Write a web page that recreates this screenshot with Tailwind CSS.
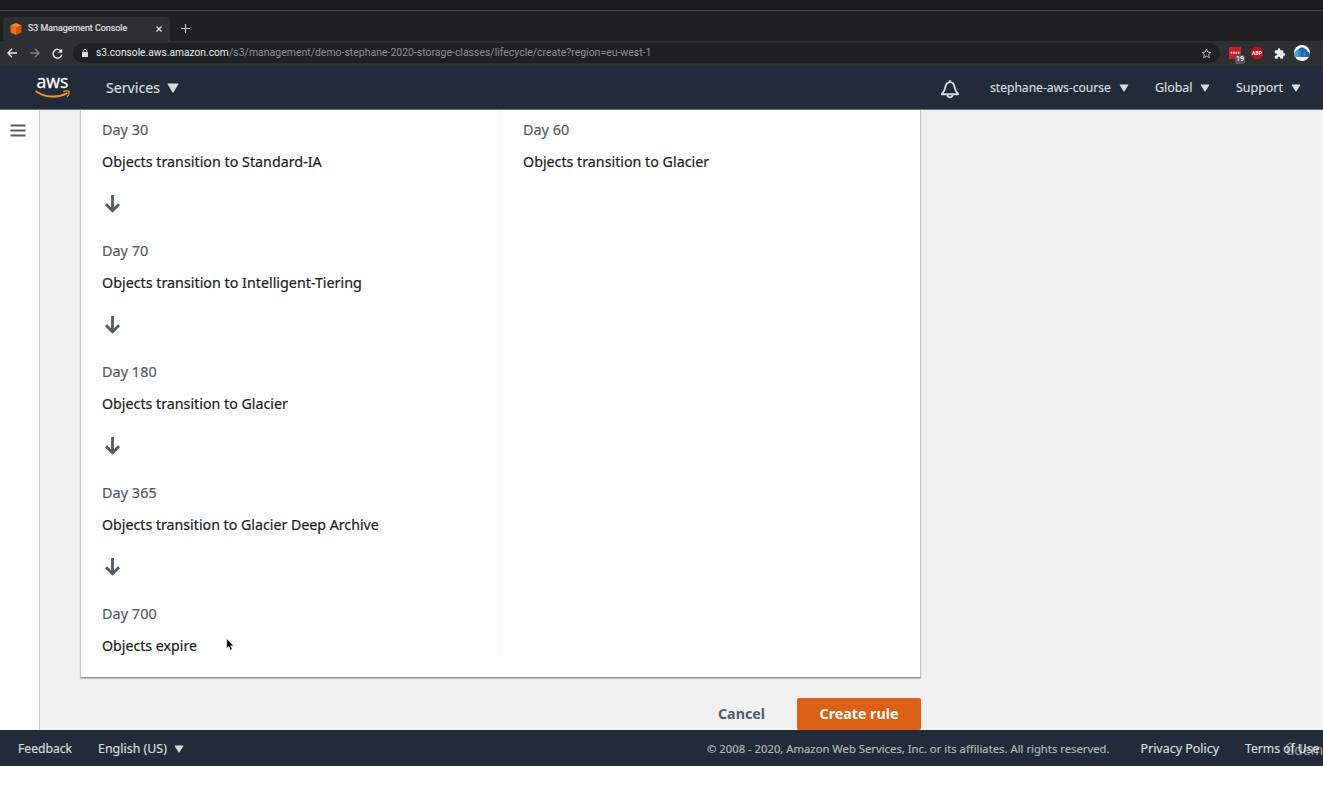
<!DOCTYPE html>
<html lang="en">
<head>
<meta charset="utf-8">
<title>S3 Management Console</title>
<script src="https://cdn.jsdelivr.net/npm/@tailwindcss/browser@4"></script>
</head>
<body class="h-[790px] w-[1323px] overflow-hidden bg-white font-['Noto_Sans',sans-serif] whitespace-nowrap">
<svg class="hidden">
  <symbol id="down" viewBox="0 0 16 20"><path d="M8.500 1v15M2 10.300 8.500 16.800l6.500-6.500" fill="none" stroke="#545b64" stroke-width="2.800"/></symbol>
  <symbol id="caret" viewBox="0 0 12 10"><path d="M.8.500h10.400q.6 0 .3.600L6.600 9.200q-.6.700-1.200 0L.5 1.100Q.2.500.8.500Z" fill="#d5dbdb"/></symbol>
</svg>
<div class="flex h-[766px] flex-col">
  <div class="h-[11px] shrink-0 border-b border-[#484a4c] bg-[#1b1c1e]"></div>

  <!-- Browser tabs -->
  <div class="flex h-[30px] shrink-0 items-end bg-[#1e2022] pl-[3px] font-[Roboto,sans-serif]">
    <div class="flex h-[24px] w-[167px] items-center rounded-t-[5px] bg-[#2e2f33] pl-[7px]">
      <svg class="mr-[6px] h-[12px] w-[12px] shrink-0" viewBox="0 0 12 12"><path d="M6 0 11.500 2.300 6 4.700.5 2.300Z" fill="#f58536"/><path d="M.5 2.300 6 4.500V12L.5 9.500Z" fill="#f26b21"/><path d="M11.500 2.300 6 4.500V12l5.500-2.500Z" fill="#d9500f"/></svg>
      <span class="flex-1 text-[8.900px] text-[#e3e4e6] [-webkit-text-stroke:0.15px]">S3 Management Console</span>
      <svg class="mr-[8px] h-[6px] w-[6px]" viewBox="0 0 6 6"><path d="M.5.500l5 5M5.500.500l-5 5" stroke="#e3e4e6" stroke-width="1.200"/></svg>
    </div>
    <svg class="mb-[8px] ml-[11px] h-[9px] w-[9px]" viewBox="0 0 9 9"><path d="M4.500 0v9M0 4.500h9" stroke="#c2c4c6" stroke-width="1.200"/></svg>
  </div>

  <!-- Address bar -->
  <div class="flex h-[25px] shrink-0 items-center bg-[#2e2f33] pb-[1px] pl-[7px] font-[Roboto,sans-serif]">
    <svg class="h-[10px] w-[10px]" viewBox="0 0 10 10"><path d="M10 5H1M5 .8.900 5 5 9.200" fill="none" stroke="#e8eaed" stroke-width="1.300"/></svg>
    <svg class="ml-[13px] h-[10px] w-[10px]" viewBox="0 0 10 10"><path d="M0 5h9M5 .8 9.100 5 5 9.200" fill="none" stroke="#808285" stroke-width="1.300"/></svg>
    <svg class="ml-[12px] h-[11px] w-[11px]" viewBox="0 0 11 11"><path d="M9.300 3.500A4.400 4.400 0 1 0 9.800 6.600" fill="none" stroke="#e8eaed" stroke-width="1.400"/><path d="M10.200.4v4.400H5.800Z" fill="#e8eaed"/></svg>
    <div class="ml-[10px] flex h-[20px] w-[1147px] items-center rounded-full bg-[#1e2022] pl-[9px] text-[10.400px]">
      <svg class="mr-[8px] h-[8px] w-[6px]" viewBox="0 0 6 8"><rect y="3" width="6" height="5" rx=".6" fill="#dadce0"/><path d="M1.200 3.500V2.200a1.800 1.800 0 0 1 3.600 0v1.300" fill="none" stroke="#dadce0" stroke-width=".9"/></svg>
      <span class="w-[133px] text-[10.230px] text-[#e8eaed]">s3.console.aws.amazon.com</span><span class="text-[10.470px] text-[#8d9093]">/s3/management/demo-stephane-2020-storage-classes/lifecycle/create?region=eu-west-1</span>
      <svg class="mr-[8px] ml-auto h-[11px] w-[11px]" viewBox="0 0 11 11"><path d="M5.500 1.100 6.800 4.100l3.200.3-2.400 2.100.7 3.200-2.800-1.700-2.800 1.700.7-3.200L1 4.400l3.200-.3Z" fill="none" stroke="#c4c6c9" stroke-width=".9"/></svg>
    </div>
    <div class="relative ml-[9px] h-[12px] w-[12px] bg-[#c9202b]">
      <svg class="h-[12px] w-[12px]" viewBox="0 0 12 12"><path d="M1.500 5.800h9" stroke="#f3c6c8" stroke-width="2" stroke-dasharray="1.800 .6"/></svg>
      <span class="absolute top-[8px] left-[6px] h-[9px] w-[10px] rounded-[2px] bg-[#56585b] text-center text-[7px] leading-[9px] font-medium text-white">19</span>
    </div>
    <svg class="ml-[10px] h-[12px] w-[12px]" viewBox="0 0 12 12"><path d="M3.500 0h5L12 3.500v5L8.500 12h-5L0 8.500v-5Z" fill="#c70d1e"/><text x="6" y="7.900" text-anchor="middle" font-size="5" font-weight="700" fill="#fff">ABP</text></svg>
    <svg class="ml-[11px] h-[11px] w-[11px]" viewBox="0 0 22 22"><path d="M20 10.500h-1.500V6.500a2 2 0 0 0-2-2h-4V3a2.500 2.500 0 0 0-5 0v1.500h-4a2 2 0 0 0-2 2v3.800H3a2.700 2.700 0 0 1 0 5.400H1.500v3.800a2 2 0 0 0 2 2h3.800V20a2.700 2.700 0 0 1 5.400 0v1.500h3.800a2 2 0 0 0 2-2v-4H20a2.500 2.500 0 0 0 0-5Z" fill="#eceef0"/></svg>
    <svg class="ml-[9px] h-[16px] w-[16px]" viewBox="0 0 16 16"><circle cx="8" cy="8" r="8" fill="#fff"/><path d="M.8 12a3 3 0 0 1 .4-5A3 3 0 0 1 5 4.600V12Z" fill="#45a5dd"/><path d="M4.600 12V4.500a3.700 3.700 0 0 1 6.600-.6 3 3 0 0 1 2.600 2.900 3 3 0 0 1 1.200 5.200Z" fill="#1c65ac"/><path d="M4.500 5.500h2.600V12H4.500ZM9.500 7h2v5h-2Z" fill="#3186c9"/></svg>
  </div>

  <!-- Console navigation -->
  <header class="flex h-[44px] shrink-0 items-center border-b border-[#6c727b] bg-[#222b39] text-[#d5dbdb] [-webkit-text-stroke:0.2px]">
    <svg class="ml-[34px] h-[30px] w-[38px] overflow-visible" viewBox="0 0 38 30"><text x="2.500" y="15" font-family="Open Sans" font-size="18.500" font-weight="400" textLength="32" lengthAdjust="spacingAndGlyphs" fill="#fff" stroke="#fff" stroke-width=".3">aws</text><path d="M2.300 18.400C11 24.600 23.500 25.200 32.800 20.300" fill="none" stroke="#f29423" stroke-width="1.900" stroke-linecap="round"/><path d="M29.300 18.800c2-1.200 5-1 5.800-.5.300 1.800-.4 4-1.800 5.600" fill="none" stroke="#f29423" stroke-width="1.300"/></svg>
    <span class="ml-[34px] w-[61px] text-[14.150px]">Services</span><svg class="h-[10px] w-[12px]"><use href="#caret"/></svg>
    <svg class="mt-[2px] ml-[760.500px] h-[20px] w-[20px]" viewBox="0 0 20 20"><path d="M1.800 15.200C4 12.600 5 10.800 5.300 8.500 5.800 5.300 7.300 3.100 10 3.100s4.200 2.200 4.700 5.400c.3 2.300 1.300 4.100 3.500 6.700Z" fill="none" stroke="#d5dbdb" stroke-width="1.900" stroke-linejoin="round"/><path d="M10 1v2M7.500 15.500a2.500 2.900 0 0 0 5 0" fill="none" stroke="#d5dbdb" stroke-width="1.700"/></svg>
    <span class="mt-[1px] ml-[30.500px] w-[129px] text-[12.090px]">stephane-aws-course</span><svg class="mt-[1px] h-[8px] w-[10px]" viewBox="0 0 12 10"><use href="#caret"/></svg>
    <span class="mt-[1px] ml-[26px] w-[45px] text-[12.400px]">Global</span><svg class="mt-[1px] h-[8px] w-[10px]" viewBox="0 0 12 10"><use href="#caret"/></svg>
    <span class="mt-[1px] ml-[26px] w-[54.500px] text-[12.450px]">Support</span><svg class="mt-[1px] h-[8px] w-[10px]" viewBox="0 0 12 10"><use href="#caret"/></svg>
  </header>

  <div class="flex min-h-0 flex-1 bg-[#f0f0f0]">
    <aside class="w-[40px] border-r border-[#cfd1d1] bg-white pt-[14px] pl-[10px]">
      <svg class="h-[14px] w-[16px]" viewBox="0 0 16 14"><path d="M.5 1.500h15M.5 6.500h15M.5 11.500h15" stroke="#545b64" stroke-width="2"/></svg>
    </aside>
    <main class="ml-[40px] w-[841px]">
      <section class="flex h-[568px] border-x border-b border-x-[#c6c9c9] border-b-[#8f9292] bg-white pl-[21px] text-[14.250px] text-[#1b1d20] shadow-[0_1px_1px_#c9cbcb] [-webkit-text-stroke:0.2px]">
        <div class="h-[547px] w-[399px] border-r border-[#f2f3f3] pt-[4px]">
          <div class="h-[121px]"><p class="h-[32px] text-[14.400px] leading-[32px] text-[#545b64]">Day 30</p><p class="h-[32px] text-[14.310px] leading-[32px]">Objects transition to Standard-IA</p><svg class="mt-[16px] ml-[2px] h-[20px] w-[16px]"><use href="#down"/></svg></div>
          <div class="h-[121px]"><p class="h-[32px] text-[14.400px] leading-[32px] text-[#545b64]">Day 70</p><p class="h-[32px] text-[14.310px] leading-[32px]">Objects transition to Intelligent-Tiering</p><svg class="mt-[16px] ml-[2px] h-[20px] w-[16px]"><use href="#down"/></svg></div>
          <div class="h-[121px]"><p class="h-[32px] text-[14.400px] leading-[32px] tracking-[.05px] text-[#545b64]">Day 180</p><p class="h-[32px] text-[14.240px] leading-[32px]">Objects transition to Glacier</p><svg class="mt-[16px] ml-[2px] h-[20px] w-[16px]"><use href="#down"/></svg></div>
          <div class="h-[121px]"><p class="h-[32px] text-[14.400px] leading-[32px] tracking-[.05px] text-[#545b64]">Day 365</p><p class="h-[32px] text-[14.200px] leading-[32px]">Objects transition to Glacier Deep Archive</p><svg class="mt-[16px] ml-[2px] h-[20px] w-[16px]"><use href="#down"/></svg></div>
          <div><p class="h-[32px] text-[14.400px] leading-[32px] tracking-[.05px] text-[#545b64]">Day 700</p><p class="h-[32px] text-[14.180px] leading-[32px]">Objects expire</p></div>
        </div>
        <div class="pt-[4px] pl-[22px]"><p class="h-[32px] text-[14.400px] leading-[32px] text-[#545b64]">Day 60</p><p class="h-[32px] leading-[32px]">Objects transition to Glacier</p></div>
      </section>
      <div class="mt-[20px] flex justify-end text-[14.240px] font-bold">
        <button class="mr-[32px] h-[31px] text-[#545b64]">Cancel</button>
        <button class="h-[32px] w-[124px] rounded-[2px] bg-[#dd6018] pb-[1px] text-white">Create rule</button>
      </div>
    </main>
  </div>

  <footer class="flex h-[36px] shrink-0 items-center bg-[#222b39] pt-[2px] text-[#d5dbdb] [-webkit-text-stroke:0.2px]">
    <span class="ml-[18px] w-[80px] text-[12.130px]">Feedback</span>
    <span class="w-[76px] text-[12.450px]">English (US)</span><svg class="h-[8px] w-[10px]" viewBox="0 0 12 10"><use href="#caret"/></svg>
    <span class="ml-[523px] w-[433.500px] text-[11.270px] text-[#aab7b8]">© 2008 - 2020, Amazon Web Services, Inc. or its affiliates. All rights reserved.</span>
    <span class="w-[104.500px] text-[12.440px]">Privacy Policy</span>
    <span class="text-[12.170px]">Terms of Use</span>
  </footer>
</div>
<!-- Video watermark and mouse pointer -->
<div class="absolute top-[739px] left-[1286px] h-[20px] w-[37px] overflow-hidden font-[Lato,sans-serif] text-[15px] leading-[20px] text-white/50"><svg class="absolute top-[3px] left-0 h-[4px] w-[8px]" viewBox="0 0 8 4"><path d="M.5 3.500 4 1l3.500 2.500" fill="none" stroke="#fff" stroke-opacity=".5" stroke-width="1.300"/></svg>udem</div>
<svg class="absolute top-[638px] left-[226px] h-[13px] w-[9px]" viewBox="0 0 9 13"><path d="M.7.500v10l2.200-2 1.500 3.600 1.900-.8-1.500-3.500h3Z" fill="#000" stroke="#fff" stroke-width=".6"/></svg>
</body>
</html>
